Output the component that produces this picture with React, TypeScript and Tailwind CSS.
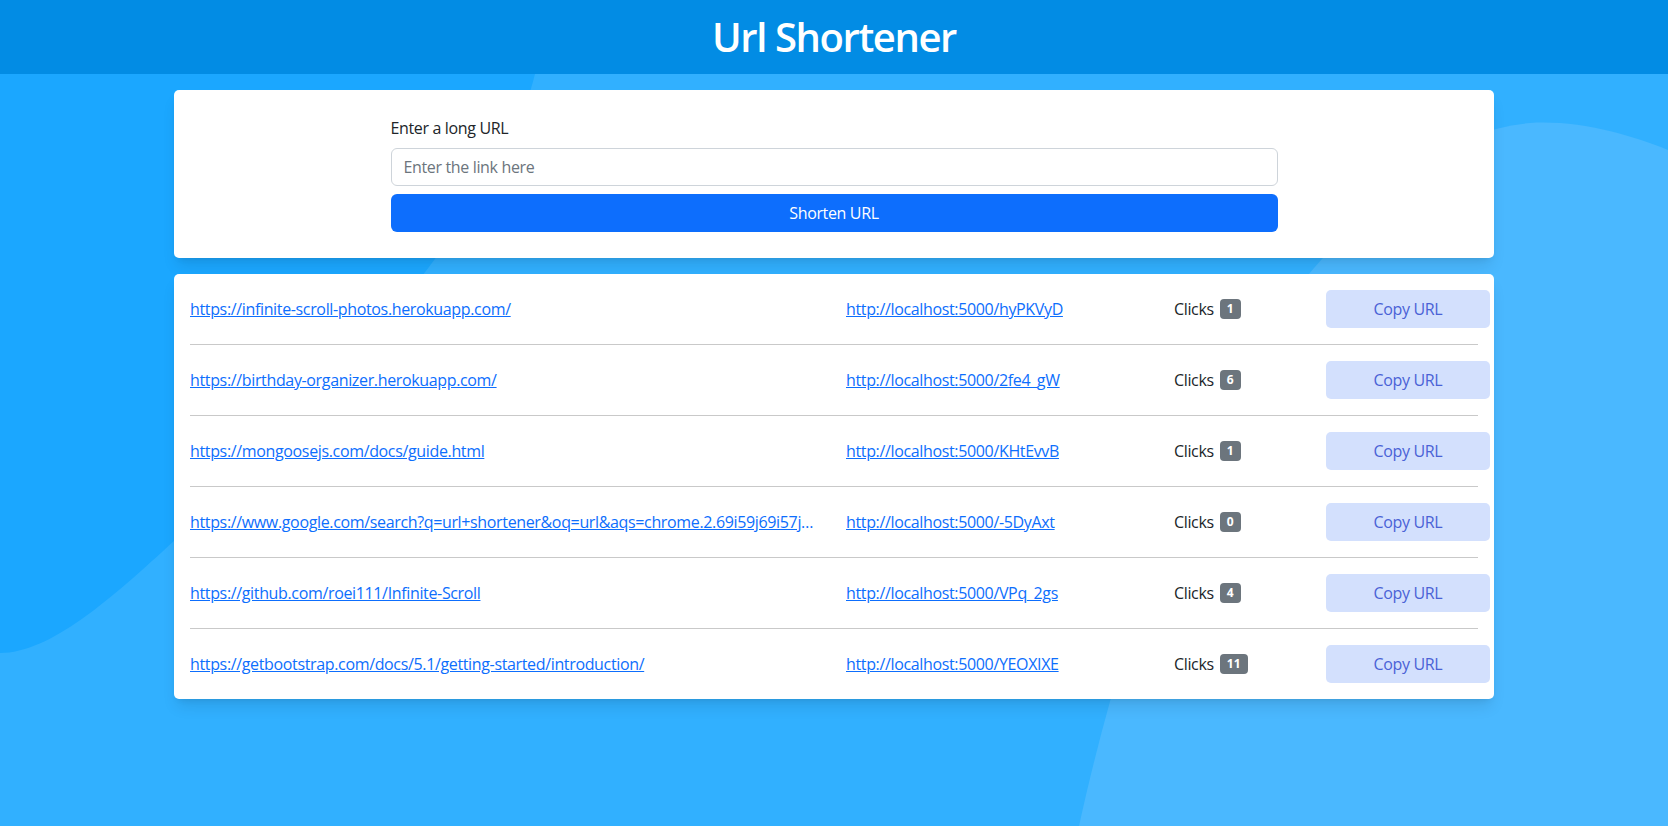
import React from 'react'

type Link = {
    id: number,
    full: string,
    short: string,
    clicks: number,
}

const links: Link[] = [
    { id: 1, full: 'https://infinite-scroll-photos.herokuapp.com/', short: 'http://localhost:5000/hyPKVyD', clicks: 1 },
    { id: 2, full: 'https://birthday-organizer.herokuapp.com/', short: 'http://localhost:5000/2fe4_gW', clicks: 6 },
    { id: 3, full: 'https://mongoosejs.com/docs/guide.html', short: 'http://localhost:5000/KHtEvvB', clicks: 1 },
    { id: 4, full: 'https://www.google.com/search?q=url+shortener&oq=url&aqs=chrome.2.69i59j69i57j0i433j0i131i433j0l6.1525j0j7&sourceid=chrome&ie=UTF-8', short: 'http://localhost:5000/-5DyAxt', clicks: 0 },
    { id: 5, full: 'https://github.com/roei111/Infinite-Scroll', short: 'http://localhost:5000/VPq_2gs', clicks: 4 },
    { id: 6, full: 'https://getbootstrap.com/docs/5.1/getting-started/introduction/', short: 'http://localhost:5000/YEOXIXE', clicks: 11 },
]

function Background() {
    return (
        <svg className="absolute inset-0 w-full h-full" viewBox="0 0 1668 826" preserveAspectRatio="none">
            <path d="M0 74 H535 C505 200 330 400 175 540 C110 600 50 653 0 653 Z" fill="#1ba7ff" />
            <path d="M1079 826 C1120 640 1200 380 1340 240 C1400 180 1450 130 1530 123 C1580 120 1630 135 1668 150 V826 Z" fill="#4ab8ff" />
        </svg>
    )
}

function LinkRow({ link, last }: { link: Link, last: boolean }) {
    return (
        <>
            <div className="flex items-center px-4 py-4">
                <div className="w-[656px] shrink-0 min-w-0 pr-[29px]">
                    <a href={link.full} className="block truncate text-[#0d6efd] underline">{link.full}</a>
                </div>
                <div className="w-[328px] shrink-0">
                    <a href={link.short} className="text-[#0d6efd] underline">{link.short}</a>
                </div>
                <div className="w-[152px] shrink-0 flex items-center text-[#212529]">
                    Clicks
                    <span className="ml-[6px] inline-flex items-center justify-center h-[20px] px-[7px] rounded-[4px] bg-[#6c757d] text-white text-[12px] font-bold leading-none tracking-normal">{link.clicks}</span>
                </div>
                <button className="w-[164px] shrink-0 h-[38px] rounded-[5px] bg-[#d3e0fd] text-[#4a62d6]">Copy URL</button>
            </div>
            {!last && <div className="mx-4 h-px bg-[#c9c9c9]" />}
        </>
    )
}

export default function App() {
    return (
        <div className="relative min-h-screen bg-[#31b0ff] font-['Open_Sans','Noto_Sans',sans-serif] text-base tracking-[-0.35px] text-[#212529]">
            <Background />
            <header className="relative h-[74px] bg-[#028ce4] flex items-center justify-center">
                <h1 className="text-[40px] font-semibold tracking-[-1.4px] text-white leading-none">Url Shortener</h1>
            </header>
            <main className="relative w-[1320px] mx-auto pt-4 pb-10 flex flex-col gap-4">
                <div className="bg-white rounded-[5px] shadow-lg pt-[26px] pb-[26px]">
                    <div className="w-[887px] mx-auto">
                        <label className="block mb-2 leading-6">Enter a long URL</label>
                        <input
                            className="block w-full h-[38px] px-3 border border-[#ced4da] rounded-[6px] placeholder:text-[#6c757d] outline-none"
                            placeholder="Enter the link here"
                        />
                        <button className="mt-2 w-full h-[38px] rounded-[6px] bg-[#0d6efd] text-white">Shorten URL</button>
                    </div>
                </div>
                <div className="bg-white rounded-[5px] shadow-lg">
                    {links.map((link, i) => (
                        <LinkRow key={link.id} link={link} last={i === links.length - 1} />
                    ))}
                </div>
            </main>
        </div>
    )
}
